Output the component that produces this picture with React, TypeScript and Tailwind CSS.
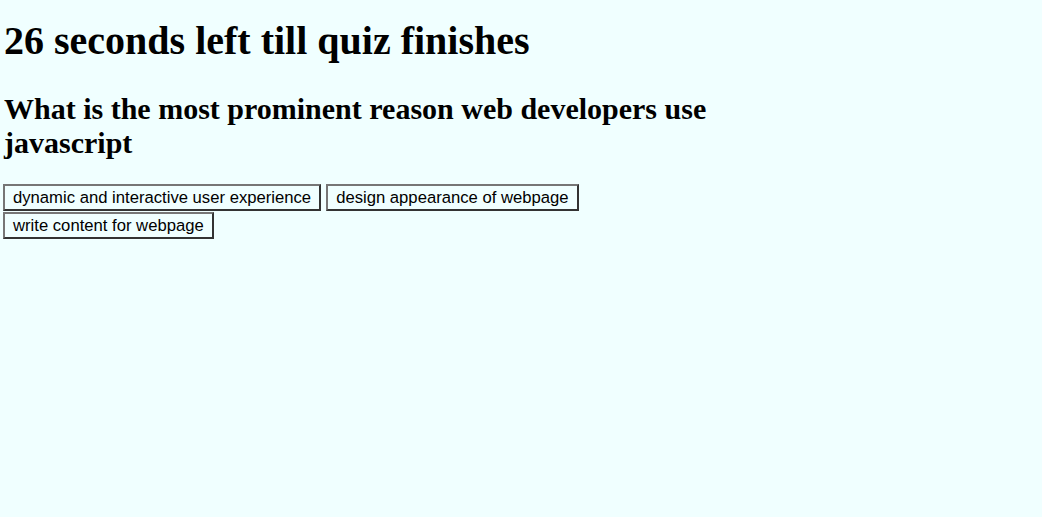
import React from "react";

const answers = [
  "dynamic and interactive user experience",
  "design appearance of webpage",
  "write content for webpage",
];

const App = () => {
  return (
    <div className="min-h-[517px] bg-[#f0ffff] px-[4px] pt-px text-black">
      <div className="w-[720px]">
        <h1 className="mt-[17px] mb-[28px] font-['Liberation_Serif',serif] text-[40px] font-bold leading-[46px]">
          26 seconds left till quiz finishes
        </h1>
        <h2 className="mb-[24px] font-['Liberation_Serif',serif] text-[30px] font-bold leading-[34px]">
          What is the most prominent reason web developers use javascript
        </h2>
        <div className="flex flex-wrap gap-x-[5px] gap-y-px -ml-px">
          {answers.map((a) => (
            <button
              key={a}
              className="border-2 border-t-[#767676] border-l-[#767676] border-b-[#333] border-r-[#333] bg-[#f0ffff] px-[8px] py-[2px] font-['Liberation_Sans',Arial,sans-serif] text-[16.67px] leading-[19px]"
            >
              {a}
            </button>
          ))}
        </div>
      </div>
    </div>
  );
};

export default App;
